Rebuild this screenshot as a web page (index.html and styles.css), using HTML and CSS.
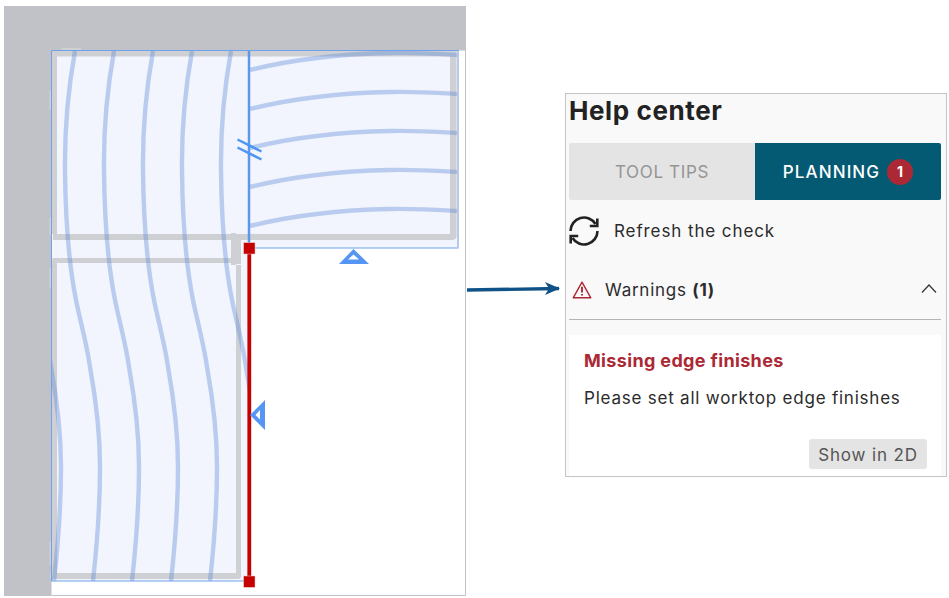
FILE: index.html
```html
<!DOCTYPE html>
<html lang="en">
<head>
    <meta charset="UTF-8">
    <meta name="viewport" content="width=device-width, initial-scale=1.0">
    <title>Help center - Planning</title>
    <link rel="stylesheet" href="styles.css">
</head>
<body>
    <div class="page">
        <!-- Worktop plan -->
        <svg class="plan" viewBox="0 0 466 598" aria-label="Worktop plan">
            <defs>
                <clipPath id="worktop-left">
                    <path d="M52 51H249V581H52Z"/>
                </clipPath>
                <clipPath id="worktop-right">
                    <path d="M249 51H458V248H249Z"/>
                </clipPath>
                <path id="grain-v" d="M75 51C68 90 64.5 130 65 170C65.5 220 69 265 76 300C80 320 87 345 90 367C96 400 100 435 100 467C100 505 97 545 93 581"/>
                <path id="grain-h" d="M250 70C290 60 340 54 390 53C420 52.5 440 54 458 55"/>
            </defs>

            <!-- Walls -->
            <path class="wall" d="M4 6H466V50.5H51.5V596H4Z"/>
            <path class="room-edge" d="M465.5 50V595.5H51.5"/>

            <!-- Worktop fill -->
            <path class="worktop" d="M52 51H458V248H249V581H52Z"/>

            <!-- Cabinets underneath -->
            <g class="cabinet">
                <path d="M52 51H455V56.5H52Z"/>
                <path d="M450 51H456.5V236Q456.5 240 452 240H53V234H450Z"/>
                <path d="M52 56H57V234H52Z"/>
                <path d="M53 258H236V233H231V265H236V263H57V573H236V265H241V574Q242 579 238 579H50V573H52V263Q52 258 53 258Z"/>
                <path d="M62 48H81V51H62Z"/>
                <path d="M49.5 91H52V110H49.5Z"/>
                <path d="M49.5 217H52V235H49.5Z"/>
                <path d="M49.5 268H52V288H49.5Z"/>
                <path d="M49.5 541H52V565H49.5Z"/>
                <path d="M231 235H241V264H231Z"/>
            </g>

            <!-- Grain -->
            <g class="grain" clip-path="url(#worktop-left)">
                <use href="#grain-v" x="-39"/>
                <use href="#grain-v"/>
                <use href="#grain-v" x="39"/>
                <use href="#grain-v" x="78"/>
                <use href="#grain-v" x="117"/>
                <use href="#grain-v" x="156"/>
            </g>
            <g class="grain" clip-path="url(#worktop-right)">
                <use href="#grain-h"/>
                <use href="#grain-h" y="39"/>
                <use href="#grain-h" y="78"/>
                <use href="#grain-h" y="117"/>
                <use href="#grain-h" y="156"/>
            </g>

            <!-- Outlines -->
            <path class="outline" d="M249 248H458.5V50.5H51.5V581H244"/>
            <path class="outline-right" d="M458 51V248"/>
            <path class="seam" d="M249 51V244"/>
            <path class="seam-tick" d="M237.5 139.5L261.5 151.5M237.5 147.5L261.5 159.5"/>

            <!-- Selected edge -->
            <path class="edge" d="M249.3 250V580"/>
            <rect class="edge-end" x="243.7" y="242.7" width="11.3" height="11.3"/>
            <rect class="edge-end" x="243.7" y="576" width="11.3" height="11.3"/>

            <!-- Edge markers -->
            <path class="marker" fill-rule="evenodd" d="M353.5 249L369 264H339ZM353.5 254.5L348 259.5H359Z"/>
            <path class="marker" fill-rule="evenodd" d="M250 415L265 400V430ZM255.5 415L260 419.5V410Z"/>
        </svg>

        <!-- Callout arrow -->
        <svg class="callout" viewBox="0 0 99 24">
            <path class="callout-line" d="M1 15L93 13.5"/>
            <path class="callout-head" d="M79 7L94 13.5L79 20L83 13.5Z"/>
        </svg>

        <!-- Help center panel -->
        <aside class="panel">
            <h2 class="panel-title">Help center</h2>

            <div class="tabs">
                <div class="tab">TOOL TIPS</div>
                <div class="tab tab-active">PLANNING <span class="badge">1</span></div>
            </div>

            <div class="refresh">
                <svg class="refresh-icon" viewBox="0 0 30 30">
                    <path d="M1.5 15A13.5 13.5 0 0 1 26.5 8"/>
                    <path d="M28.5 15A13.5 13.5 0 0 1 3.5 22"/>
                    <path d="M28.3 2.5V10H20.8"/>
                    <path d="M1.7 27.5V20H9.2"/>
                </svg>
                <span>Refresh the check</span>
            </div>

            <div class="warnings">
                <svg class="warn-icon" viewBox="0 0 20 18">
                    <path d="M10 1.2L18.8 16.8H1.2Z"/>
                    <path class="warn-mark" d="M10 5.8V11.5M10 13V14.6"/>
                </svg>
                <span class="warnings-label">Warnings <strong>(1)</strong></span>
                <svg class="chevron" viewBox="0 0 16 9">
                    <path d="M1 8.5L8 1L15 8.5"/>
                </svg>
            </div>

            <div class="issue">
                <h3 class="issue-title">Missing edge finishes</h3>
                <p class="issue-text">Please set all worktop edge finishes</p>
                <div class="issue-actions">
                    <button class="show-btn" type="button">Show in 2D</button>
                </div>
            </div>
        </aside>
    </div>
</body>
</html>
```

FILE: styles.css
```css
/* Base Styles */
html, body {
    margin: 0;
    padding: 0;
    height: 100%;
    overflow: hidden;
    background-color: #fff;
}

body {
    font-family: "Inter", "Liberation Sans", sans-serif;
    color: #2b2b2b;
}

.page {
    display: flex;
    align-items: flex-start;
}

/* Plan */
.plan {
    display: block;
    flex: none;
    width: 466px;
    height: 598px;
}

.wall { fill: #c0c2c7; }
.room-edge { fill: none; stroke: #c0c2c7; stroke-width: 1; }
.worktop { fill: #f2f5fd; }
.cabinet { fill: #cfd0d4; }

.grain use {
    fill: none;
    stroke: rgba(84, 134, 214, 0.36);
    stroke-width: 4.4;
    filter: blur(0.4px);
}

.outline { fill: none; stroke: #6fa2ea; stroke-width: 1; }
.outline-right { fill: none; stroke: #b9c9ee; stroke-width: 2; }
.seam { fill: none; stroke: #5b98ea; stroke-width: 2.5; }
.seam-tick { fill: none; stroke: #4f95f2; stroke-width: 2.5; }
.edge { fill: none; stroke: #c40000; stroke-width: 3.8; }
.edge-end { fill: #c40000; stroke: #eec0c0; stroke-width: 0.5; }
.marker { fill: #5596f5; }

/* Callout arrow */
.callout {
    display: block;
    flex: none;
    width: 99px;
    height: 24px;
    margin-top: 275px;
}

.callout-line { fill: none; stroke: #0f5288; stroke-width: 3.4; }
.callout-head { fill: #0f5288; }

/* Panel */
.panel {
    flex: none;
    box-sizing: border-box;
    width: 382px;
    height: 384px;
    margin-top: 93px;
    padding: 0 5px 0 3px;
    display: flex;
    flex-direction: column;
    background-color: #f9f9f9;
    border: 1px solid #c4c4c4;
}

.panel-title {
    margin: 0;
    height: 49px;
    font-size: 26px;
    line-height: 33px;
    font-weight: 700;
    letter-spacing: 0.6px;
    color: #222;
}

/* Tabs */
.tabs {
    display: flex;
    height: 57px;
    flex: none;
}

.tab {
    flex: 0 0 186px;
    display: flex;
    align-items: center;
    justify-content: center;
    gap: 7px;
    font-size: 17px;
    letter-spacing: 0.66px;
    color: #959595;
    background-color: #e4e4e4;
    border-radius: 2px 0 0 2px;
}

.tab-active {
    flex: 1;
    font-weight: 500;
    letter-spacing: 1.1px;
    color: #fff;
    background-color: #055a73;
    border-radius: 0 2px 2px 0;
}

.badge {
    width: 26px;
    height: 26px;
    border-radius: 50%;
    display: flex;
    align-items: center;
    justify-content: center;
    font-size: 14px;
    font-weight: 700;
    letter-spacing: 0;
    background-color: #ab2834;
}

/* Refresh row */
.refresh {
    display: flex;
    align-items: center;
    gap: 15px;
    height: 61px;
    flex: none;
    font-size: 17px;
    letter-spacing: 0.9px;
}

.refresh-icon {
    width: 30px;
    height: 30px;
    fill: none;
    stroke: #222;
    stroke-width: 2.6;
}

/* Warnings row */
.warnings {
    display: flex;
    align-items: center;
    height: 58px;
    flex: none;
    padding: 0 4px 0 3px;
    font-size: 17px;
    letter-spacing: 0.75px;
    border-bottom: 1px solid #b5b5b5;
}

.warn-icon {
    width: 20px;
    height: 18px;
    fill: none;
    stroke: #ab2834;
    stroke-width: 1.4;
    stroke-linejoin: round;
}

.warn-mark {
    stroke-width: 1.9;
}

.warnings-label {
    flex: 1;
    margin-left: 13px;
}

.chevron {
    width: 16px;
    height: 9px;
    margin-top: -4px;
    fill: none;
    stroke: #333;
    stroke-width: 1.2;
}

/* Issue card */
.issue {
    flex: 1;
    margin-top: 15px;
    padding: 15px 14px 7px 15px;
    display: flex;
    flex-direction: column;
    background-color: #fff;
}

.issue-title {
    margin: 0;
    font-size: 18px;
    line-height: 22px;
    font-weight: 700;
    letter-spacing: 0.35px;
    color: #ab2834;
}

.issue-text {
    margin: 16px 0 0;
    font-size: 17px;
    line-height: 20px;
    letter-spacing: 0.78px;
}

.issue-actions {
    margin-top: auto;
    display: flex;
    justify-content: flex-end;
}

.show-btn {
    width: 118px;
    height: 30px;
    padding: 2px 0 0;
    font-family: inherit;
    font-size: 17px;
    letter-spacing: 0.86px;
    color: #555;
    background-color: #e4e4e4;
    border: none;
    border-radius: 3px;
}
```
